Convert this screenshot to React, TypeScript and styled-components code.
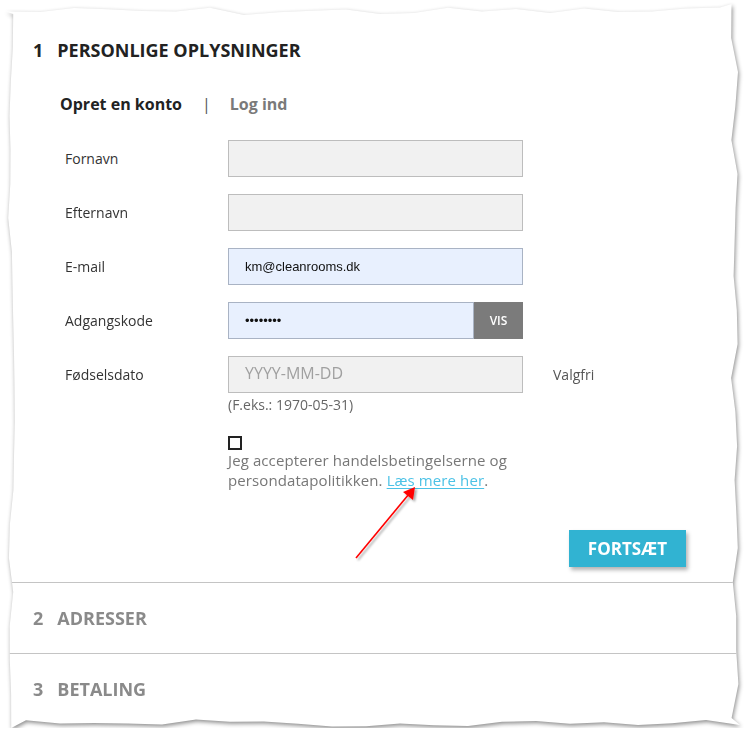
import styled, { createGlobalStyle } from 'styled-components';

const GlobalStyle = createGlobalStyle`
  html, body {
    margin: 0;
    padding: 0;
    background: #fff;
    font-family: 'Open Sans', 'Noto Sans', Arial, sans-serif;
  }
`;

// torn paper edge, deterministic wobble
const buildEdge = (w: number, h: number) => {
  let seed = 7;
  const rnd = () => {
    seed = (seed * 9301 + 49297) % 233280;
    return seed / 233280;
  };
  const pts: string[] = [];
  const step = 34;
  for (let x = 0; x <= w; x += step) pts.push(`${Math.min(x, w)}px ${(3 + rnd() * 9).toFixed(1)}px`);
  for (let y = 0; y <= h; y += step) pts.push(`${(w - 1 - rnd() * 8).toFixed(1)}px ${Math.min(y, h)}px`);
  for (let x = w; x >= 0; x -= step) pts.push(`${Math.max(x, 0)}px ${(h - 1 - rnd() * 8).toFixed(1)}px`);
  for (let y = h; y >= 0; y -= step) pts.push(`${(2 + rnd() * 7).toFixed(1)}px ${Math.max(y, 0)}px`);
  return `polygon(${pts.join(', ')})`;
};

const PAPER_W = 734;
const PAPER_H = 724;

const Page = styled.div`
  padding: 4px 0 0 6px;
`;

const PaperShadow = styled.div`
  width: ${PAPER_W}px;
  filter: drop-shadow(1px 2px 2px rgba(0, 0, 0, 0.45));
`;

const Paper = styled.div`
  position: relative;
  height: ${PAPER_H}px;
  background: #fff;
  clip-path: ${buildEdge(PAPER_W, PAPER_H)};
  display: flex;
  flex-direction: column;
`;

const Section = styled.section<{ $open?: boolean }>`
  border-bottom: 1px solid #c4c4c4;
  padding: ${({ $open }) => ($open ? '34px 54px 15px 27px' : '23px 27px')};
  &:last-of-type {
    border-bottom: none;
  }
`;

const Heading = styled.h2<{ $muted?: boolean }>`
  margin: 0;
  display: flex;
  gap: 14px;
  font-size: 18px;
  line-height: 24px;
  font-weight: 700;
  color: ${({ $muted }) => ($muted ? '#8a8a8a' : '#222')};
`;

const Tabs = styled.div`
  display: flex;
  align-items: center;
  margin: 31px 0 0 27px;
  font-size: 16px;
  line-height: 22px;
  font-weight: 700;
`;

const Tab = styled.span<{ $active?: boolean }>`
  color: ${({ $active }) => ($active ? '#222' : '#7a7a7a')};
`;

const TabDivider = styled.span`
  margin: 0 19px 0 20px;
  color: #555;
  font-weight: 400;
`;

const Form = styled.div`
  display: flex;
  flex-direction: column;
  gap: 17px;
  margin: 25px 0 0 32px;
`;

const Row = styled.div`
  display: grid;
  grid-template-columns: 163px 295px auto;
  align-items: start;
`;

const Label = styled.label`
  font-size: 14px;
  line-height: 37px;
  color: #333;
`;

const Aside = styled.span`
  margin-left: 30px;
  font-size: 14px;
  line-height: 37px;
  color: #555;
`;

const FieldCell = styled.div`
  display: flex;
  flex-direction: column;
`;

const InputGroup = styled.div`
  display: flex;
`;

const Input = styled.input<{ $filled?: boolean }>`
  box-sizing: border-box;
  flex: 1 1 auto;
  width: 100%;
  min-width: 0;
  height: 37px;
  margin: 0;
  padding: 0 16px;
  border: 1px solid ${({ $filled }) => ($filled ? '#a9b3c4' : '#bdbdbd')};
  background: ${({ $filled }) => ($filled ? '#e8f0fe' : '#f1f1f1')};
  font-family: 'Liberation Sans', Arial, sans-serif;
  font-size: 13px;
  color: #111;
  outline: none;
  &::placeholder {
    font-family: 'Open Sans', sans-serif;
    font-size: 16px;
    color: #a0a0a0;
  }
`;

const ShowButton = styled.button`
  flex: none;
  width: 49px;
  height: 37px;
  border: none;
  background: #7b7b7b;
  color: #fff;
  font-family: 'Open Sans', sans-serif;
  font-size: 12px;
  font-weight: 600;
  padding: 0;
`;

const Hint = styled.span`
  margin-top: 3px;
  font-size: 14px;
  line-height: 18px;
  color: #666;
`;

const Consent = styled.div`
  margin: 22px 0 0 195px;
  width: 300px;
  font-size: 15px;
  letter-spacing: 0.1px;
  line-height: 20px;
  color: #777;
`;

const Checkbox = styled.span`
  display: block;
  box-sizing: border-box;
  width: 14px;
  height: 14px;
  border: 2px solid #222;
`;

const Link = styled.a`
  color: #4cc2e6;
  text-decoration: underline;
  text-underline-offset: 2px;
`;

const Actions = styled.div`
  display: flex;
  justify-content: flex-end;
  margin-top: 40px;
`;

const PrimaryButton = styled.button`
  width: 117px;
  height: 37px;
  border: none;
  background: #31b3d2;
  color: #fff;
  font-family: 'Open Sans', sans-serif;
  font-size: 17px;
  font-weight: 700;
  box-shadow: 2px 3px 4px rgba(0, 0, 0, 0.3);
`;

const Annotation = styled.svg`
  position: absolute;
  left: 0;
  top: 0;
  pointer-events: none;
  overflow: visible;
`;

const App = () => {
  return (
    <>
      <GlobalStyle />
      <Page>
        <PaperShadow>
          <Paper>
            <Section $open>
              <Heading>
                <span>1</span>
                <span>PERSONLIGE OPLYSNINGER</span>
              </Heading>
              <Tabs>
                <Tab $active>Opret en konto</Tab>
                <TabDivider>|</TabDivider>
                <Tab>Log ind</Tab>
              </Tabs>
              <Form>
                <Row>
                  <Label>Fornavn</Label>
                  <Input readOnly />
                </Row>
                <Row>
                  <Label>Efternavn</Label>
                  <Input readOnly />
                </Row>
                <Row>
                  <Label>E-mail</Label>
                  <Input $filled readOnly defaultValue="km@cleanrooms.dk" />
                </Row>
                <Row>
                  <Label>Adgangskode</Label>
                  <InputGroup>
                    <Input $filled readOnly type="password" defaultValue="12345678" />
                    <ShowButton>VIS</ShowButton>
                  </InputGroup>
                </Row>
                <Row>
                  <Label>Fødselsdato</Label>
                  <FieldCell>
                    <Input readOnly placeholder="YYYY-MM-DD" />
                    <Hint>(F.eks.: 1970-05-31)</Hint>
                  </FieldCell>
                  <Aside>Valgfri</Aside>
                </Row>
              </Form>
              <Consent>
                <Checkbox />
                Jeg accepterer handelsbetingelserne og persondatapolitikken.{' '}
                <Link>Læs mere her</Link>.
              </Consent>
              <Actions>
                <PrimaryButton>FORTSÆT</PrimaryButton>
              </Actions>
            </Section>
            <Section>
              <Heading $muted>
                <span>2</span>
                <span>ADRESSER</span>
              </Heading>
            </Section>
            <Section>
              <Heading $muted>
                <span>3</span>
                <span>BETALING</span>
              </Heading>
            </Section>
            <Annotation width={PAPER_W} height={PAPER_H}>
              <defs>
                <filter id="arrowShadow" x="-20%" y="-20%" width="140%" height="140%">
                  <feDropShadow dx="2" dy="2" stdDeviation="1.2" floodColor="#000" floodOpacity="0.35" />
                </filter>
              </defs>
              <g filter="url(#arrowShadow)">
                <line x1={350} y1={554} x2={403} y2={490} stroke="#f00" strokeWidth={1.6} />
                <polygon points="409,483 407,496 397,488" fill="#f00" />
              </g>
            </Annotation>
          </Paper>
        </PaperShadow>
      </Page>
    </>
  );
};

export default App;
